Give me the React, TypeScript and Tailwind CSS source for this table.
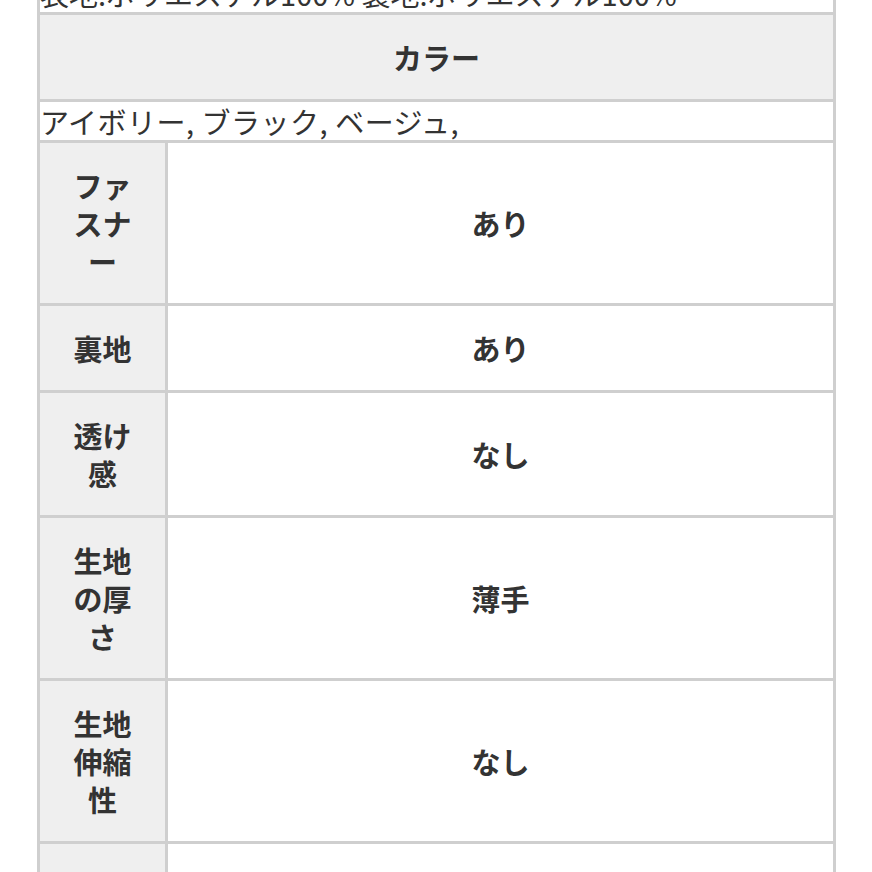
import React from "react";

const rows: { label: string; value: string }[] = [
  { label: "ファスナー", value: "あり" },
  { label: "裏地", value: "あり" },
  { label: "透け感", value: "なし" },
  { label: "生地の厚さ", value: "薄手" },
  { label: "生地伸縮性", value: "なし" },
  { label: "ポケット", value: "なし" },
];

export default function App() {
  return (
    <div className="min-h-[872px] bg-white overflow-hidden font-['Noto_Sans_CJK_JP','Noto_Sans',sans-serif] text-[#333] text-[29px] leading-[38px]">
      <table className="ml-[37px] mt-[-29px] w-[799px] border-collapse border-[3px] border-[#cfcfcf] table-fixed">
        <colgroup>
          <col className="w-[128px]" />
          <col />
        </colgroup>
        <tbody>
          <tr>
            <td colSpan={2} className="border-[3px] border-[#cfcfcf] bg-white p-0 text-left whitespace-nowrap overflow-hidden">
              表地:ポリエステル100% 裏地:ポリエステル100%
            </td>
          </tr>
          <tr>
            <th colSpan={2} className="border-[3px] border-[#cfcfcf] bg-[#efefef] py-[23px] text-center font-bold">
              カラー
            </th>
          </tr>
          <tr>
            <td colSpan={2} className="border-[3px] border-[#cfcfcf] bg-white p-0 text-left tracking-[0.5px]">
              アイボリー, ブラック, ベージュ,
            </td>
          </tr>
          {rows.map((r) => (
            <tr key={r.label}>
              <th className="border-[3px] border-[#cfcfcf] bg-[#efefef] px-[24px] py-[23px] text-center font-bold break-all">
                {r.label}
              </th>
              <td className="border-[3px] border-[#cfcfcf] bg-white py-[23px] text-center font-bold">
                {r.value}
              </td>
            </tr>
          ))}
        </tbody>
      </table>
    </div>
  );
}
